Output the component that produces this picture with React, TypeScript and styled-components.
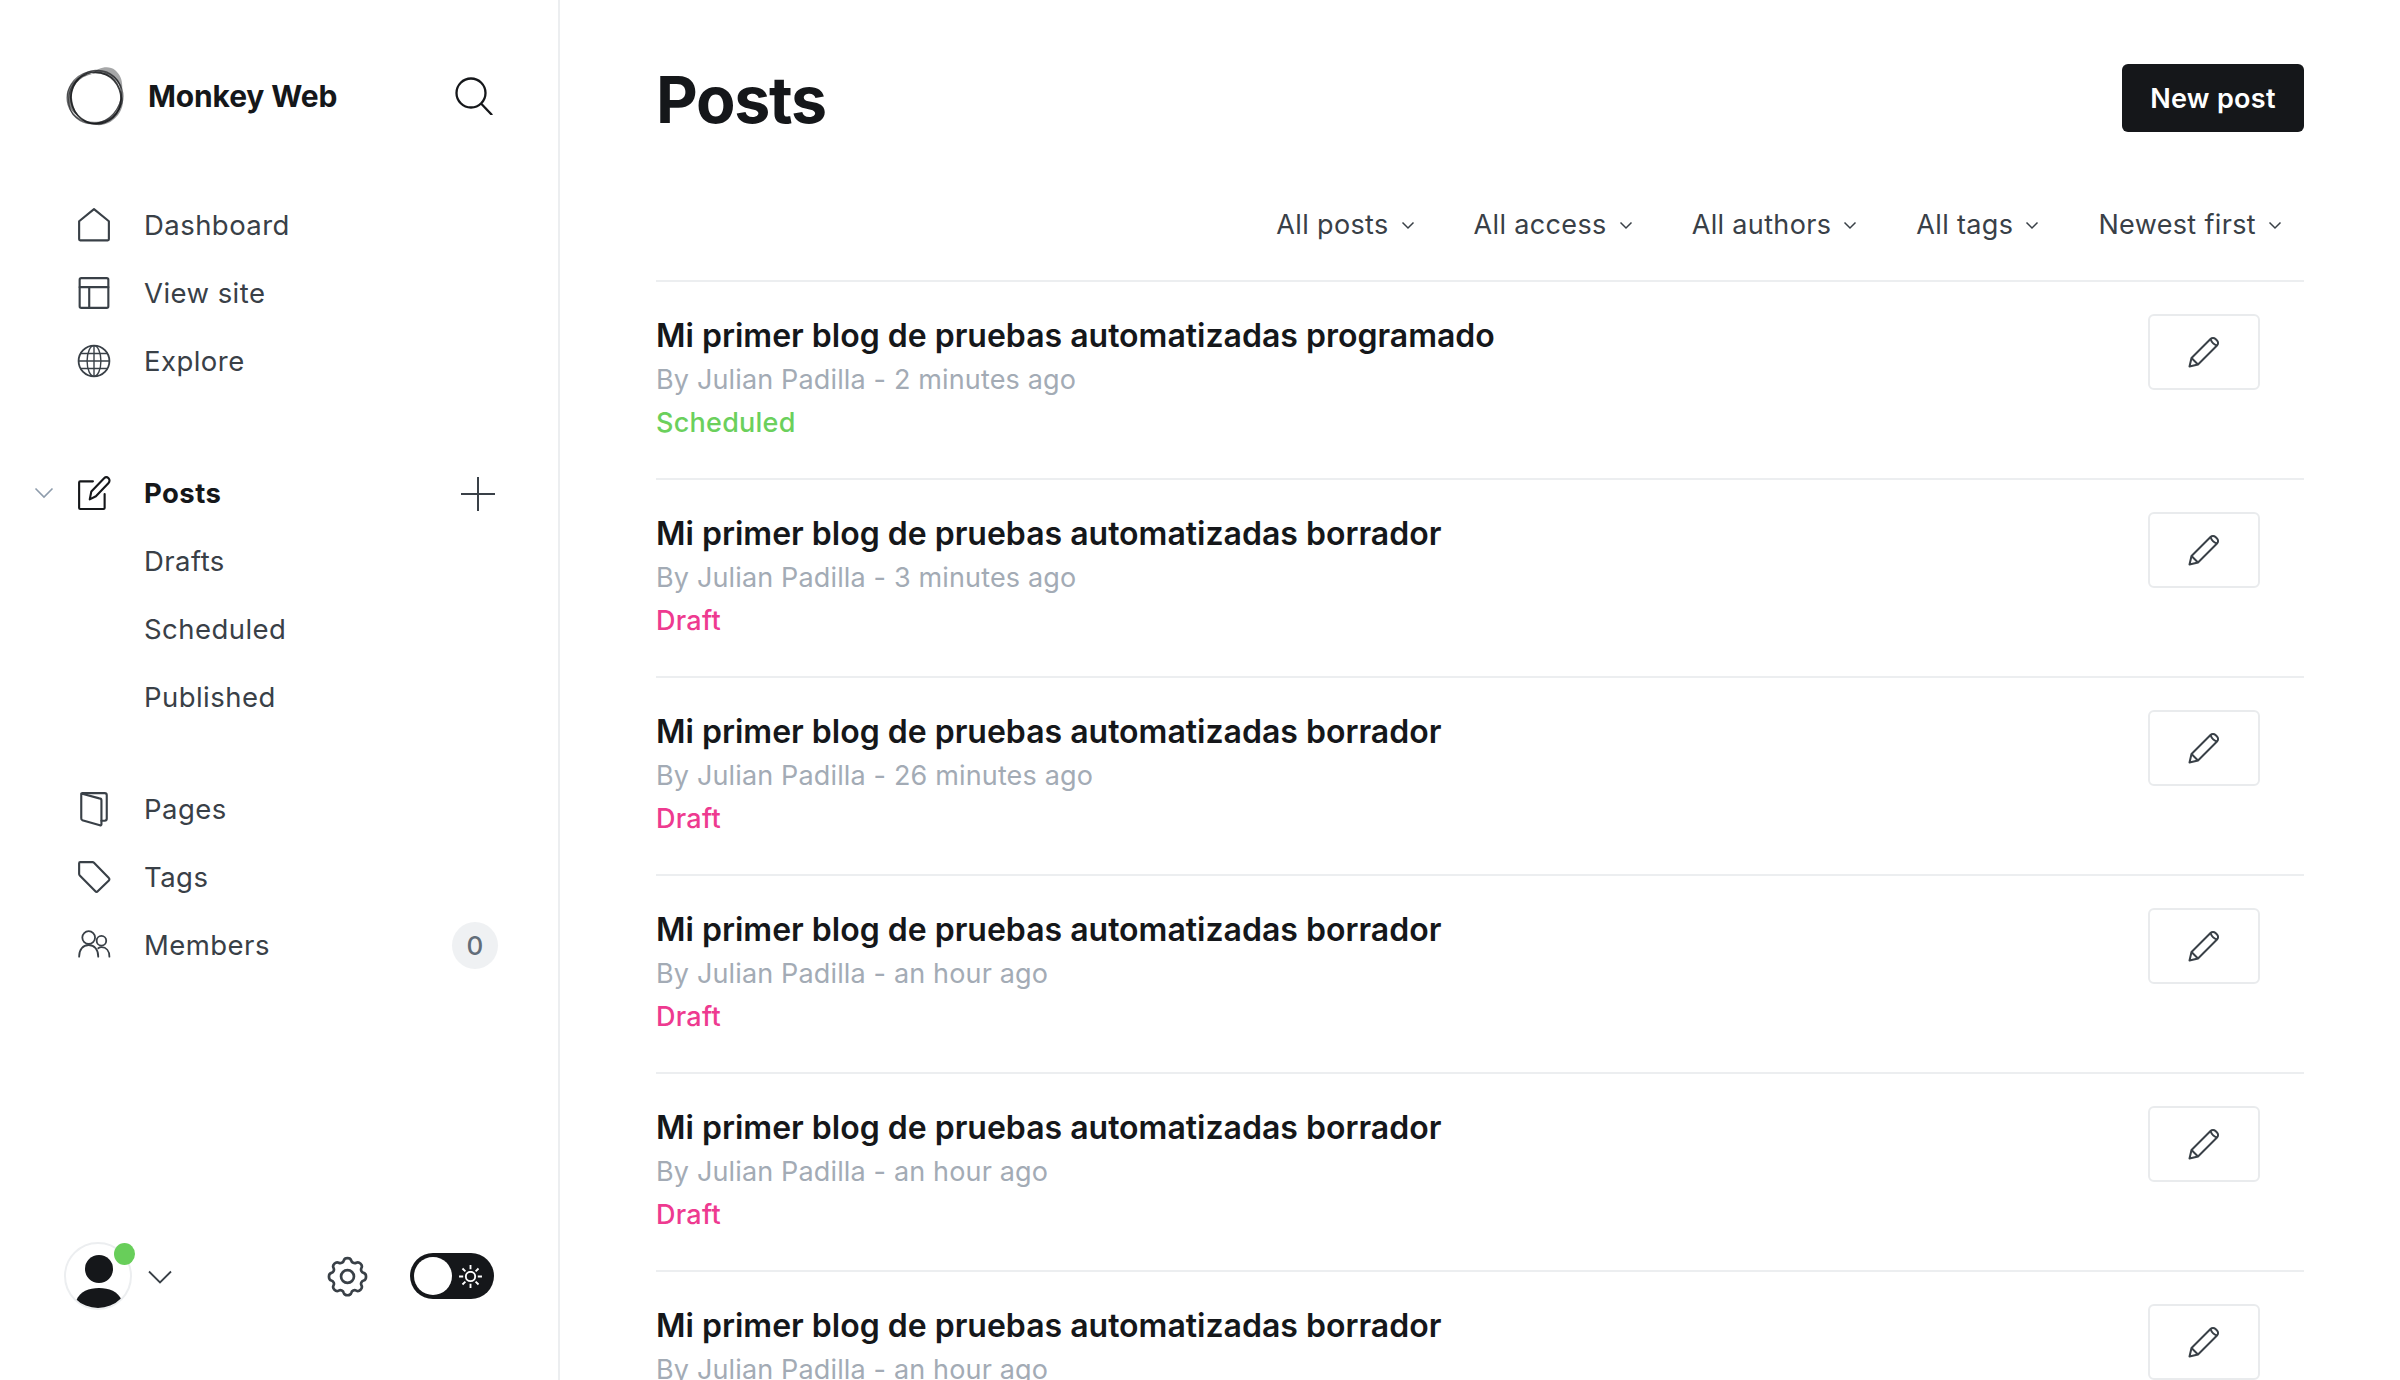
import React from 'react';
import styled, { createGlobalStyle } from 'styled-components';

const Global = createGlobalStyle`
  html, body { margin: 0; padding: 0; height: 1380px; overflow: hidden; background: #fff; }
  * { box-sizing: border-box; }
  body { font-family: Inter, "Liberation Sans", sans-serif; color: #15171a; }
`;

const Page = styled.div`display: flex; width: 2400px; height: 1380px; overflow: hidden;`;

const Sidebar = styled.aside`
  width: 560px; flex: none; height: 1380px; border-right: 2px solid #eceef0;
  display: flex; flex-direction: column; padding-top: 64px; padding-bottom: 70px;
`;
const Brand = styled.div`display: flex; align-items: center; height: 64px; padding: 0 65px 0 65px; margin-bottom: 63px;`;
const BrandName = styled.span`font-size: 30px; font-weight: 700; margin-left: 23px; flex: 1; letter-spacing: -0.15px;`;
const NavGroup = styled.nav<{ $gap?: number }>`display: flex; flex-direction: column; margin-bottom: ${p => p.$gap ?? 0}px;`;
const NavRow = styled.div<{ $caret?: boolean; $sub?: boolean; $active?: boolean }>`
  height: 68px; display: flex; align-items: center;
  padding-left: ${p => (p.$caret ? 34 : p.$sub ? 144 : 78)}px; padding-right: 60px;
  font-size: 27.5px; letter-spacing: 0.45px; color: ${p => (p.$active ? '#15171a' : '#394047')};
  font-weight: ${p => (p.$active ? 700 : 400)};
`;
const Caret = styled.svg`width: 20px; height: 12px; margin-right: 24px; flex: none;`;
const NavIcon = styled.svg`width: 32px; height: 34px; flex: none; margin-right: 34px; overflow: visible;`;
const NavLabel = styled.span`flex: 1;`;
const PlusIcon = styled.svg`width: 34px; height: 34px; flex: none; margin-right: 3px; margin-top: 1px;`;
const Badge = styled.span`
  width: 46px; height: 47px; border-radius: 50%; background: #eff1f3; color: #626d79;
  display: flex; align-items: center; justify-content: center; font-size: 26px; font-weight: 500;
  letter-spacing: 0;
`;
const Footer = styled.div`margin-top: auto; display: flex; align-items: center; padding: 0 64px 0 64px; height: 68px;`;
const Avatar = styled.div`
  position: relative; width: 68px; height: 68px; border-radius: 50%; border: 2px solid #eceef0;
  overflow: visible; flex: none; margin-right: 16px;
`;
const AvatarArt = styled.svg`width: 64px; height: 64px; display: block; border-radius: 50%;`;
const Online = styled.span`
  position: absolute; top: -1px; right: -5px; width: 21px; height: 22px; border-radius: 50%; background: #68ce5a;
`;
const FooterChevron = styled.svg`width: 24px; height: 14px; flex: none; margin-top: 1px;`;
const Gear = styled.svg`width: 43px; height: 43px; flex: none; margin-left: auto; margin-right: 41px;`;
const Toggle = styled.div`
  width: 84px; height: 46px; border-radius: 23px; background: #15171a; flex: none;
  display: flex; align-items: center; padding: 4px 11px 4px 4px; justify-content: space-between;
`;
const Knob = styled.span`width: 38px; height: 38px; border-radius: 50%; background: #fff; flex: none;`;
const Sun = styled.svg`width: 25px; height: 25px; flex: none;`;

const Main = styled.main`flex: 1; min-width: 0; padding: 64px 96px 0; overflow: hidden; height: 1380px;`;
const Header = styled.header`display: flex; align-items: center; justify-content: space-between; height: 68px; margin-bottom: 70px;`;
const Title = styled.h1`margin: 0; font-size: 64.5px; font-weight: 700; letter-spacing: -1.3px; line-height: 68px; padding-top: 4px;`;
const NewPost = styled.button`
  width: 182px; height: 68px; border: 0; border-radius: 6px; background: #15171a; color: #fff;
  font: 600 27px Inter, "Liberation Sans", sans-serif; letter-spacing: 0.3px; padding: 0;
`;
const Filters = styled.div`display: flex; justify-content: flex-end; align-items: center; gap: 59px; height: 44px; padding-right: 22px; margin-bottom: 34px;`;
const Filter = styled.span`display: flex; align-items: center; gap: 12px; font-size: 27px; letter-spacing: 0.35px; color: #394047;`;
const FilterCaret = styled.svg`width: 14px; height: 9px; flex: none; margin-top: 2px;`;
const Rows = styled.div`border-top: 2px solid #eceef0;`;
const Row = styled.article`
  height: 198px; border-bottom: 2px solid #eceef0; display: flex; justify-content: space-between;
  padding: 32px 44px 0 0;
`;
const RowText = styled.div`display: flex; flex-direction: column;`;
const PostTitle = styled.h3`margin: 0; font-size: 32px; line-height: 44px; font-weight: 600;`;
const Meta = styled.p`margin: 0; font-size: 27px; line-height: 44px; letter-spacing: 0.15px; color: #a3abb5;`;
const Status = styled.span<{ $scheduled?: boolean }>`
  font-size: 27px; line-height: 42px; letter-spacing: 0.25px; font-weight: 500;
  color: ${p => (p.$scheduled ? '#6bd05c' : '#ee3a90')};
`;
const EditButton = styled.button`
  width: 112px; height: 76px; border: 2px solid #e9ebed; border-radius: 6px; background: #fff;
  display: flex; align-items: center; justify-content: center; padding: 0; flex: none;
`;
const Pencil = styled.svg`width: 32px; height: 32px;`;

const line = { fill: 'none', stroke: '#394047', strokeWidth: 2, strokeLinecap: 'round' as const, strokeLinejoin: 'round' as const };

const Logo = () => (
  <svg width="60" height="60" viewBox="0 0 60 60" style={{ flex: 'none' }}>
    <path d="M27 8C33 1 44-1 50 4c6 5 8 12 7 20C54 15 42 6 27 8z" fill="#15171a" opacity=".38" />
    <path d="M2 30C3 17 14 8 27 8 14 11 6 20 7 32c1 8 3 14 8 19C7 47 2 40 2 30z" fill="#15171a" opacity=".55" />
    <path d="M15 52c10 6 24 5 32-3 6-7 10-15 9-26 3 8 3 16-1 23-6 10-15 14-24 13-7-.5-12-3-16-7z" fill="#15171a" opacity=".45" />
    <g fill="none" stroke="#15171a">
      <ellipse cx="31" cy="32" rx="25" ry="26" strokeWidth="1.800" transform="rotate(-20 31 32)" opacity=".85" />
      <ellipse cx="30" cy="31" rx="28" ry="25" strokeWidth="1.200" transform="rotate(-48 30 31)" opacity=".6" />
      <ellipse cx="30" cy="31" rx="28" ry="26" strokeWidth="1.200" transform="rotate(-15 30 31)" opacity=".6" />
    </g>
  </svg>
);

const Search = () => (
  <svg width="38" height="38" viewBox="0 0 38 38" style={{ flex: 'none' }} fill="none" stroke="#15171a" strokeWidth="2.300" strokeLinecap="round">
    <circle cx="16" cy="16" r="14.500" /><path d="M26.500 27l10 10.500" />
  </svg>
);

const icons: Record<string, React.ReactNode> = {
  home: <path d="M15 1L1 12.500V29.500a1 1 0 0 0 1 1h26a1 1 0 0 0 1-1V12.500z" />,
  view: <><rect x="1.500" y="2" width="27" height="28" rx="1.500" /><path d="M1.500 10.500h27M10.500 10.500V30" /></>,
  globe: <><circle cx="15" cy="16" r="14.500" strokeWidth="1.700" /><ellipse cx="15" cy="16" rx="6.500" ry="14.500" strokeWidth="1.300" /><path d="M15 1.500v29M2.500 9h25M.5 16h29M2.500 23h25" strokeWidth="1.300" /></>,
  posts: <><path d="M14 5H2a1 1 0 0 0-1 1v24a1 1 0 0 0 1 1h22a1 1 0 0 0 1-1V17" stroke="#15171a" /><path d="M11 22l1.500-7.500L24.500 2.200a3 3 0 0 1 4.200 0l0 0a3 3 0 0 1 0 4.300L16.800 19z" stroke="#15171a" /></>,
  pages: <><path d="M4 1h21a2 2 0 0 1 2 2v22a2 2 0 0 1-2 2h-3" /><path d="M3 1.500L20 6a2 2 0 0 1 2 2v22.500a1 1 0 0 1-1.400.8L4 26.500a2 2 0 0 1-1-2V1.500z" /></>,
  tags: <path d="M2 2h11.500a2 2 0 0 1 1.500.6L29 17a1.500 1.500 0 0 1 0 2.200L18.500 29.500a1.500 1.500 0 0 1-2.200 0L1.600 14.500A2 2 0 0 1 1 13V3a1 1 0 0 1 1-1z" />,
  members: <g strokeWidth="1.700"><circle cx="10" cy="9" r="6" /><path d="M1 27c0-6.500 3.500-11 9-11s9 4.500 9 11" /><circle cx="22" cy="12" r="4.500" /><path d="M19 19c1-.7 2-1 3-1 4.500 0 7.500 3.500 7.500 9" /></g>,
};

const Item: React.FC<{ icon: string; label: string; children?: React.ReactNode }> = ({ icon, label, children }) => (
  <NavRow>
    <NavIcon viewBox="0 0 30 32" {...line}>{icons[icon]}</NavIcon>
    <NavLabel>{label}</NavLabel>
    {children}
  </NavRow>
);

const FILTERS = ['All posts', 'All access', 'All authors', 'All tags', 'Newest first'];
const POSTS = [
  { title: 'Mi primer blog de pruebas automatizadas programado', time: '2 minutes ago', scheduled: true },
  { title: 'Mi primer blog de pruebas automatizadas borrador', time: '3 minutes ago' },
  { title: 'Mi primer blog de pruebas automatizadas borrador', time: '26 minutes ago' },
  { title: 'Mi primer blog de pruebas automatizadas borrador', time: 'an hour ago' },
  { title: 'Mi primer blog de pruebas automatizadas borrador', time: 'an hour ago' },
  { title: 'Mi primer blog de pruebas automatizadas borrador', time: 'an hour ago' },
];

export default function App() {
  return (
    <Page>
      <Global />
      <Sidebar>
        <Brand><Logo /><BrandName>Monkey Web</BrandName><Search /></Brand>
        <NavGroup $gap={64}>
          <Item icon="home" label="Dashboard" />
          <Item icon="view" label="View site" />
          <Item icon="globe" label="Explore" />
        </NavGroup>
        <NavGroup $gap={44}>
          <NavRow $caret $active>
            <Caret viewBox="0 0 20 12" fill="none" stroke="#8e9cac" strokeWidth="1.600"><path d="M1.500 1.500L10 10l8.500-8.500" /></Caret>
            <NavIcon viewBox="0 0 30 32" {...line}>{icons.posts}</NavIcon>
            <NavLabel>Posts</NavLabel>
            <PlusIcon viewBox="0 0 34 34" fill="none" stroke="#394047" strokeWidth="2"><path d="M17 0v34M0 17h34" /></PlusIcon>
          </NavRow>
          <NavRow $sub>Drafts</NavRow>
          <NavRow $sub>Scheduled</NavRow>
          <NavRow $sub>Published</NavRow>
        </NavGroup>
        <NavGroup>
          <Item icon="pages" label="Pages" />
          <Item icon="tags" label="Tags" />
          <Item icon="members" label="Members"><Badge>0</Badge></Item>
        </NavGroup>
        <Footer>
          <Avatar>
            <AvatarArt viewBox="0 0 64 64">
              <circle cx="33" cy="25" r="14" fill="#15171a" />
              <path d="M10 57C14 47 23 44 33 44s19 3 23 13c-5 5-14 8-23 8s-18-3-23-8z" fill="#15171a" />
            </AvatarArt>
            <Online />
          </Avatar>
          <FooterChevron viewBox="0 0 24 14" fill="none" stroke="#394047" strokeWidth="1.800"><path d="M1 1.500l11 11 11-11" /></FooterChevron>
          <Gear viewBox="0 0 24 24" fill="none" stroke="#394047" strokeWidth="1.500" strokeLinejoin="round">
            <circle cx="12" cy="12" r="3.600" />
            <path d="M9.900 3.100c.5-1.800 3.700-1.800 4.200 0 .3 1.200 1.700 1.800 2.800 1.200 1.600-.9 3.800 1.300 2.900 2.900-.6 1.100 0 2.500 1.200 2.800 1.800.5 1.800 3.700 0 4.200-1.200.3-1.800 1.700-1.200 2.800.9 1.600-1.300 3.800-2.900 2.900-1.100-.6-2.500 0-2.800 1.200-.5 1.800-3.700 1.800-4.200 0-.3-1.200-1.700-1.800-2.800-1.200-1.600.9-3.800-1.300-2.900-2.900.6-1.100 0-2.500-1.200-2.800-1.800-.5-1.800-3.700 0-4.200 1.200-.3 1.800-1.700 1.200-2.800-.9-1.600 1.300-3.800 2.900-2.900 1.100.6 2.500 0 2.800-1.200z" />
          </Gear>
          <Toggle>
            <Knob />
            <Sun viewBox="0 0 24 24" fill="none" stroke="#fff" strokeWidth="1.800">
              <circle cx="12" cy="12" r="4.500" />
              <path d="M12 1v4M12 19v4M1 12h4M19 12h4M4.300 4.300l2.800 2.800M16.900 16.900l2.800 2.800M4.300 19.700l2.800-2.800M16.900 7.100l2.800-2.800" />
            </Sun>
          </Toggle>
        </Footer>
      </Sidebar>
      <Main>
        <Header><Title>Posts</Title><NewPost>New post</NewPost></Header>
        <Filters>
          {FILTERS.map(f => (
            <Filter key={f}>{f}
              <FilterCaret viewBox="0 0 14 9" fill="none" stroke="#394047" strokeWidth="1.500"><path d="M1.500 1.500L7 7l5.500-5.500" /></FilterCaret>
            </Filter>
          ))}
        </Filters>
        <Rows>
          {POSTS.map((p, i) => (
            <Row key={i}>
              <RowText>
                <PostTitle>{p.title}</PostTitle>
                <Meta>By Julian Padilla - {p.time}</Meta>
                <Status $scheduled={p.scheduled}>{p.scheduled ? 'Scheduled' : 'Draft'}</Status>
              </RowText>
              <EditButton>
                <Pencil viewBox="0 0 32 32" fill="none" stroke="#394047" strokeWidth="2" strokeLinejoin="round">
                  <path d="M1.500 30.500l2-8.500L22.500 3a3.500 3.500 0 0 1 5 0l1.500 1.500a3.500 3.500 0 0 1 0 5L10 28.500z" />
                  <path d="M3.500 22L10 28.500M22.500 3c1 3 3.500 5.500 6.500 6.500" />
                </Pencil>
              </EditButton>
            </Row>
          ))}
        </Rows>
      </Main>
    </Page>
  );
}
